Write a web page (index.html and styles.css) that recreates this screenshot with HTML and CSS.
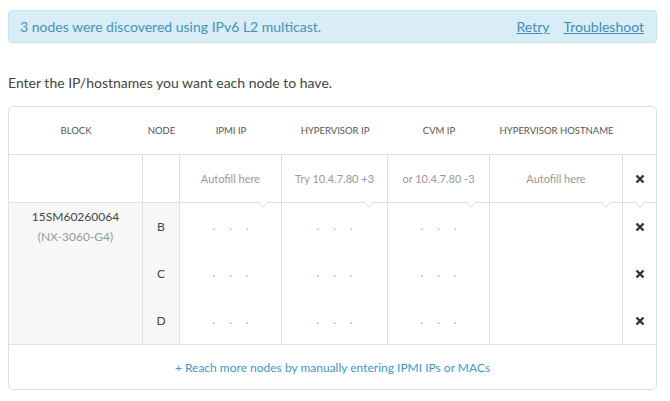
FILE: index.html
```html
<!DOCTYPE html>
<html>
<head>
<meta charset="utf-8">
<link rel="stylesheet" href="styles.css">
</head>
<body>
<div class="page">
  <div class="banner">
    <span class="banner-text">3 nodes were discovered using IPv6 L2 multicast.</span>
    <span class="banner-links"><a class="link">Retry</a><a class="link">Troubleshoot</a></span>
  </div>
  <p class="intro">Enter the IP/hostnames you want each node to have.</p>
  <div class="grid">
    <div class="h">BLOCK</div>
    <div class="h">NODE</div>
    <div class="h">IPMI IP</div>
    <div class="h">HYPERVISOR IP</div>
    <div class="h">CVM IP</div>
    <div class="h">HYPERVISOR HOSTNAME</div>
    <div class="h last-col"></div>

    <div class="c af"></div>
    <div class="c af"></div>
    <div class="c af ph caret">Autofill here</div>
    <div class="c af ph caret">Try 10.4.7.80 +3</div>
    <div class="c af ph caret">or 10.4.7.80 -3</div>
    <div class="c af ph caret caret-host">Autofill here</div>
    <div class="c af last-col caret caret-mid"><svg class="x" viewBox="0 0 10 10"><path d="M1.5 1.5L8.5 8.5M8.5 1.5L1.5 8.5"/></svg></div>

    <div class="c block"><div class="serial">15SM60260064</div><div class="model">(NX-3060-G4)</div></div>
    <div class="c node">B</div>
    <div class="c ip"><span>.</span><span>.</span><span>.</span></div>
    <div class="c ip"><span>.</span><span>.</span><span>.</span></div>
    <div class="c ip"><span>.</span><span>.</span><span>.</span></div>
    <div class="c"></div>
    <div class="c last-col"><svg class="x" viewBox="0 0 10 10"><path d="M1.5 1.5L8.5 8.5M8.5 1.5L1.5 8.5"/></svg></div>

    <div class="c node">C</div>
    <div class="c ip"><span>.</span><span>.</span><span>.</span></div>
    <div class="c ip"><span>.</span><span>.</span><span>.</span></div>
    <div class="c ip"><span>.</span><span>.</span><span>.</span></div>
    <div class="c"></div>
    <div class="c last-col"><svg class="x" viewBox="0 0 10 10"><path d="M1.5 1.5L8.5 8.5M8.5 1.5L1.5 8.5"/></svg></div>

    <div class="c node end">D</div>
    <div class="c ip end"><span>.</span><span>.</span><span>.</span></div>
    <div class="c ip end"><span>.</span><span>.</span><span>.</span></div>
    <div class="c ip end"><span>.</span><span>.</span><span>.</span></div>
    <div class="c end"></div>
    <div class="c last-col end"><svg class="x" viewBox="0 0 10 10"><path d="M1.5 1.5L8.5 8.5M8.5 1.5L1.5 8.5"/></svg></div>

    <div class="foot"><a class="more">+ Reach more nodes by manually entering IPMI IPs or MACs</a></div>
  </div>
</div>
</body>
</html>
```
FILE: styles.css
```css
* { box-sizing: border-box; }
html, body { margin: 0; padding: 0; background: #fff; }
body {
  font-family: Lato, "Open Sans", sans-serif;
  color: #444;
}
.page {
  padding: 10px 0 0 8px;
  width: 657px;
}
.banner {
  height: 33px;
  background: #d9edf7;
  border: 1px solid #c8e3f0;
  border-radius: 4px;
  display: flex;
  align-items: center;
  justify-content: space-between;
  padding: 0 12px 0 11px;
  font-size: 14px;
  color: #4592bf;
}
.banner-links { display: flex; gap: 14px; }
.link { color: #3d8ebd; text-decoration: underline; cursor: pointer; }
.intro {
  margin: 30px 0 13px 0;
  line-height: 20px;
  font-size: 14px;
  color: #444;
}
.grid {
  display: grid;
  grid-template-columns: 134px 37px 102px 106px 102px 133px 33px;
  grid-template-rows: 48px 48px 47px 47px 48px 44px;
  border: 1px solid #dde1e6;
  border-radius: 5px;
  width: 649px;
}
.h {
  display: flex;
  align-items: center;
  justify-content: center;
  font-size: 9.5px;
  color: #555;
  white-space: nowrap;
  border-bottom: 1px solid #dde1e6;
}
.c {
  display: flex;
  align-items: center;
  justify-content: center;
  border-right: 1px solid #dde1e6;
  font-size: 12px;
  color: #444;
}
.c.last-col { border-right: none; }
.af {
  border-bottom: 1px solid #dde1e6;
  position: relative;
}
.ph { font-size: 11px; color: #999; }
.caret::after {
  content: "";
  position: absolute;
  bottom: -4px;
  right: 14px;
  width: 7px;
  height: 7px;
  background: #fff;
  border-right: 1px solid #dde1e6;
  border-bottom: 1px solid #dde1e6;
  transform: rotate(45deg);
  z-index: 1;
}
.caret-host::after { right: 12px; }
.caret-mid::after { right: auto; left: 13px; }
.block {
  grid-row: span 3;
  flex-direction: column;
  justify-content: flex-start;
  padding-top: 5px;
  background: #f7f7f7;
  border-bottom: 1px solid #dde1e6;
}
.serial { font-size: 12px; color: #444; line-height: 18px; }
.model { font-size: 12px; color: #999; line-height: 22px; }
.node { background: #f7f7f7; font-size: 12px; }
.end { border-bottom: 1px solid #dde1e6; }
.ip { gap: 14px; color: #999; font-size: 11px; padding-bottom: 2px; }
.x { width: 10px; height: 10px; }
.x path { stroke: #333; stroke-width: 2.4; fill: none; }
.foot {
  grid-column: 1 / -1;
  display: flex;
  align-items: center;
  justify-content: center;
}
.more { font-size: 12px; color: #3d9ac9; cursor: pointer; }
```
